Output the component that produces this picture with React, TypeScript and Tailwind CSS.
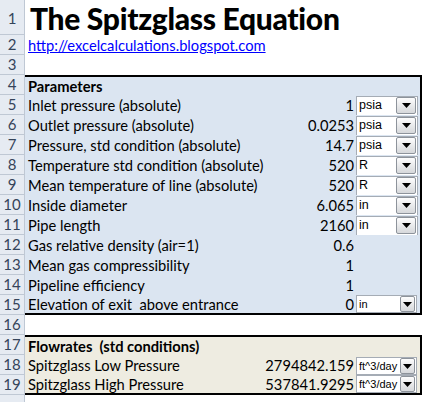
import React from "react"

type Param = {
    label: string
    value?: string
    unit?: string
}

const params: Param[] = [
    { label: "Inlet pressure (absolute)", value: "1", unit: "psia" },
    { label: "Outlet pressure (absolute)", value: "0.0253", unit: "psia" },
    { label: "Pressure, std condition (absolute)", value: "14.7", unit: "psia" },
    { label: "Temperature std condition (absolute)", value: "520", unit: "R" },
    { label: "Mean temperature of line (absolute)", value: "520", unit: "R" },
    { label: "Inside diameter", value: "6.065", unit: "in" },
    { label: "Pipe length", value: "2160", unit: "in" },
    { label: "Gas relative density (air=1)", value: "0.6" },
    { label: "Mean gas compressibility", value: "1" },
    { label: "Pipeline efficiency", value: "1" },
]

const flows: Param[] = [
    { label: "Spitzglass Low Pressure", value: "2794842.159", unit: "ft^3/day" },
    { label: "Spitzglass High Pressure", value: "537841.9295", unit: "ft^3/day" },
]

const Arrow = () => (
    <svg width="9" height="5" viewBox="0 0 9 5">
        <path d="M0 0h9L4.5 5z" fill="#000" />
    </svg>
)

// excel form-control style combo box
const Combo = ({ text, small, tall }: { text: string; small?: boolean; tall?: boolean }) => (
    <div
        className={`flex items-center bg-white border border-[#a5acb5] font-['Liberation_Sans',sans-serif] text-black ${small ? "w-[61px] text-[11px]" : "w-[62px] text-[12.5px]"} ${tall ? "h-[20px] -mb-px" : "h-[18px]"}`}
    >
        <span className="flex-1 pl-[2px] leading-none whitespace-nowrap">{text}</span>
        <div
            className={`flex items-center justify-center rounded-[2px] border border-[#8d939b] bg-gradient-to-b from-[#fdfdfd] to-[#d6d8db] mr-px ${small ? "h-[16px] w-[15px]" : "h-[17px] w-[20px]"}`}
        >
            <Arrow />
        </div>
    </div>
)

const RowHead = ({ n, tall }: { n?: number; tall?: boolean }) => (
    <div
        className={`w-[25px] shrink-0 flex justify-center border-r border-b border-[#bfc8d4] bg-[#e6ebf2] text-[15px] text-[#35445a] ${tall ? "h-[35px] items-end pb-[5px]" : "h-[20px] items-center"}`}
    >
        {n}
    </div>
)

export default function App() {
    return (
        <div className="w-[431px] h-[402px] overflow-hidden bg-white font-['Lato',sans-serif] text-black">
            <div className="flex">
                <RowHead n={1} tall />
                <div className="h-[35px] flex items-center pl-[5px] pt-[2px] text-[30px] font-black tracking-[-0.3px]">
                    The Spitzglass Equation
                </div>
            </div>
            <div className="flex">
                <RowHead n={2} />
                <div className="h-[20px] flex items-center pl-[3px] text-[14.7px]">
                    <a className="text-[#0000ff] underline" href="#">
                        http://excelcalculations.blogspot.com
                    </a>
                </div>
            </div>
            <div className="flex">
                <RowHead n={3} />
            </div>

            {/* parameters block */}
            <div className="flex">
                <RowHead n={4} />
                <div className="w-[397px] h-[20px] bg-[#dbe5f1] border-t-2 border-r-2 border-black flex items-center pl-[3px] text-[14.7px] font-bold">
                    Parameters
                </div>
            </div>
            {params.map((p, i) => (
                <div className="flex" key={p.label}>
                    <RowHead n={5 + i} />
                    <div className="w-[397px] h-[20px] bg-[#dbe5f1] border-r-2 border-black flex items-center text-[14.7px]">
                        <span className="flex-1 pl-[3px] whitespace-nowrap">{p.label}</span>
                        <span className="pr-px">{p.value}</span>
                        <div className="w-[65px] h-full flex items-center pl-px">
                            {p.unit && <Combo text={p.unit} tall />}
                        </div>
                    </div>
                </div>
            ))}
            <div className="flex">
                <RowHead n={15} />
                <div className="w-[397px] h-[20px] bg-[#dbe5f1] border-r-2 border-b-2 border-black flex items-center text-[14.7px]">
                    <span className="flex-1 pl-[3px] whitespace-pre">Elevation of exit  above entrance</span>
                    <span className="pr-px">0</span>
                    <div className="w-[65px] h-full flex items-center pl-px">
                        <Combo text="in" small />
                    </div>
                </div>
            </div>
            <div className="flex">
                <RowHead n={16} />
            </div>

            {/* results block */}
            <div className="flex">
                <RowHead n={17} />
                <div className="w-[397px] h-[20px] bg-[#eeece1] border-t-2 border-r-2 border-black flex items-center pl-[3px] text-[14.7px] font-bold whitespace-pre">
                    Flowrates  (std conditions)
                </div>
            </div>
            {flows.map((p, i) => (
                <div className="flex" key={p.label}>
                    <RowHead n={18 + i} />
                    <div
                        className={`w-[397px] h-[20px] bg-[#eeece1] border-r-2 border-black flex text-[14.7px] ${i === flows.length - 1 ? "border-b-2 items-center" : "items-end"}`}
                    >
                        <span className="flex-1 pl-[3px] whitespace-nowrap self-center">{p.label}</span>
                        <span className="pr-px self-center">{p.value}</span>
                        <div className="w-[65px] flex pl-px">
                            <Combo text={p.unit!} small />
                        </div>
                    </div>
                </div>
            ))}
            <div className="flex">
                <RowHead />
            </div>
        </div>
    )
}
